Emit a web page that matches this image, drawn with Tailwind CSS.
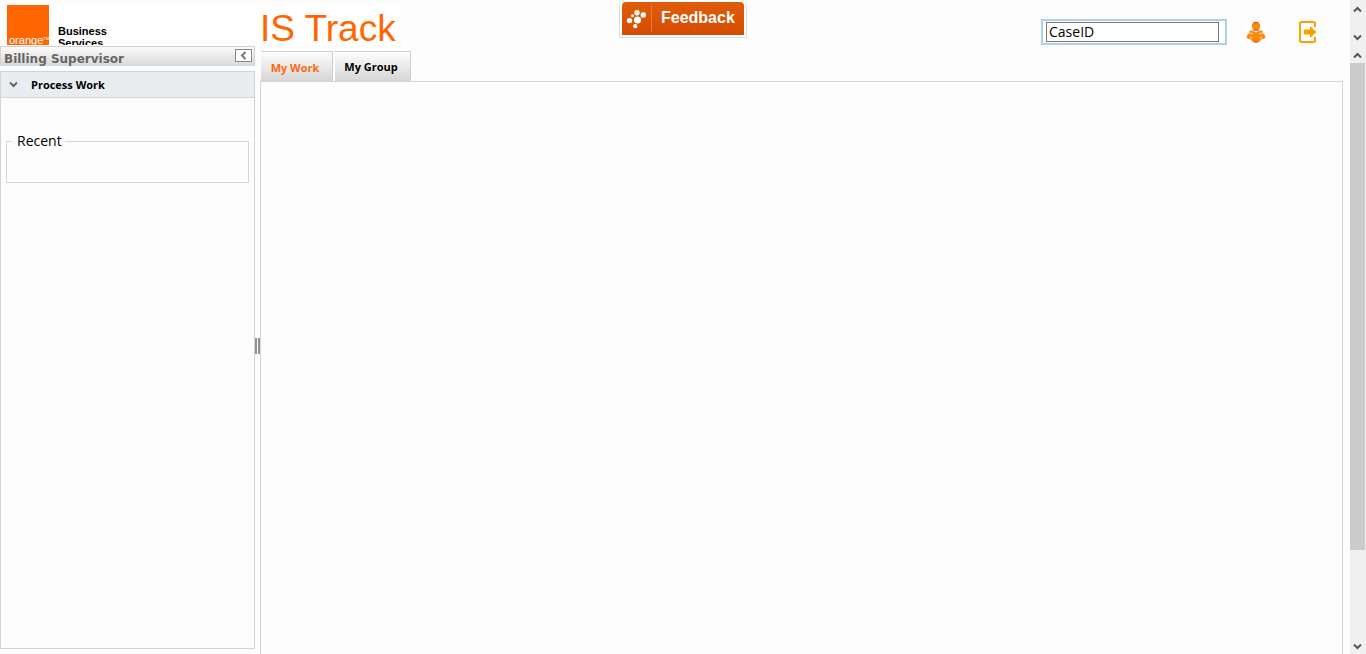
<!DOCTYPE html>
<html lang="en">
<head>
<meta charset="utf-8">
<title>IS Track</title>
<script src="https://cdn.jsdelivr.net/npm/@tailwindcss/browser@4"></script>
</head>
<body class="flex h-screen flex-col overflow-hidden bg-[#fdfdfd] font-['Open_Sans',sans-serif] text-black">
<header class="flex h-[46px] shrink-0">
  <div class="grid min-w-0 flex-1 grid-cols-[1fr_auto_1fr] items-start">
    <div class="mt-[5px] flex h-10 w-[400px] bg-white pl-[7px]">
      <div class="flex h-10 w-[42px] shrink-0 items-end bg-[#ff6600] pl-[2px] font-['Liberation_Sans',sans-serif] text-[11px] leading-[9px] text-white">orange<sup class="relative -top-1 text-[4px] leading-none">TM</sup></div>
      <p class="ml-[9px] w-[202px] shrink-0 overflow-hidden pt-5 font-['Liberation_Sans',sans-serif] text-[11px] leading-3 font-bold">Business<br>Services</p>
      <h1 class="font-['Liberation_Sans',sans-serif] text-[37px] leading-[48px] whitespace-nowrap text-[#ff6600]">IS Track</h1>
    </div>
    <button class="mr-[-8px] ml-[8px] flex h-[38px] w-32 items-stretch rounded-t-md border border-t-0 border-[#dcdcdc] bg-white px-[2px] pt-[2px] pb-[2px] font-['Liberation_Sans',sans-serif] text-base font-bold text-white">
      <span class="flex w-full rounded-t-[4px] bg-linear-to-b from-[#df5d0a] to-[#d64b02]">
        <span class="my-[3px] flex w-[30px] items-center border-r border-[#e87838] pl-1">
          <svg width="20" height="20" viewBox="0 0 20 20" fill="#fff" aria-hidden="true"><circle cx="11.5" cy="11" r="3.6"/><circle cx="11" cy="3.8" r="2.7"/><circle cx="17.3" cy="6" r="2.7"/><circle cx="3.5" cy="11.6" r="2.7"/><circle cx="9.2" cy="17.2" r="2.1"/><circle cx="6.5" cy="6.7" r="1.5"/></svg>
        </span>
        <span class="flex-1 pl-[9px] text-left leading-8">Feedback</span>
      </span>
    </button>
    <div class="mt-[19px] mr-[33px] flex items-center justify-end">
      <div class="flex h-[26px] w-[186px] items-center border-2 border-[#b0d1e6] bg-white pl-[3px]">
        <input aria-label="Case ID" value="CaseID" class="h-5 w-[173px] border border-[#777] bg-white px-[2px] pb-[2px] text-sm leading-4 outline-none">
      </div>
      <button aria-label="Profile" class="ml-[18px]">
        <svg width="22" height="22" viewBox="0 0 22 22"><path fill="#fff" d="M0 0h22v22H0z"/><path d="M5 9.500Q8.500 9 11 11.500 13.500 9 17 9.500L20.500 15.500Q20.500 17.500 17 18.300 14 21.500 11 21.500T5 18.300Q1.500 17.500 1.500 15.500z" fill="#f98a0b"/><path d="M2.500 12.500Q5 11 8 13M19.500 12.500Q17 11 14 13M5.500 15.500l1 2.500M16.500 15.500l-1 2.500" stroke="#ffe3b5" stroke-width="1" fill="none"/><circle cx="11" cy="5" r="4.200" fill="#f98a0b"/><path d="M8.500 2Q11 .5 13.500 2M8 20.500Q11 22 14 20.500M7.500 8.700Q11 10 14.500 8.700" stroke="#df4b12" fill="none" stroke-width="1"/></svg>
      </button>
      <button aria-label="Log out" class="ml-[31px]">
        <svg width="19" height="24" viewBox="0 0 19 24"><path d="M17 7V3.500Q17 2 15.500 2H3.500Q2 2 2 3.500v17Q2 22 3.500 22h12q1.500 0 1.500-1.500V17" fill="none" stroke="#ffa000" stroke-width="2"/><path d="M6 9.500h6V6l6.500 6-6.500 6v-3.500H6z" fill="#ffa000"/></svg>
      </button>
    </div>
  </div>
  <div class="flex w-4 flex-col items-center justify-between bg-[#f0f0f0] pt-[6px] pr-px pb-[5px]" aria-hidden="true">
    <svg width="9" height="7" viewBox="0 0 9 7" fill="none" stroke="#555" stroke-width="2"><path d="m1 5.500 3.500-3.500L8 5.500"/></svg>
    <svg width="9" height="7" viewBox="0 0 9 7" fill="none" stroke="#555" stroke-width="2"><path d="M1 1.500 4.500 5 8 1.500"/></svg>
  </div>
</header>
<div class="flex min-h-0 flex-1">
  <aside class="flex w-[255px] shrink-0 flex-col pb-[5px]">
    <div class="flex h-5 shrink-0 justify-between border border-b-0 border-[#d2d2d2] bg-linear-to-b from-[#fbfbfb] to-[#d8d8d8] pl-[3px]">
      <h2 class="font-['DejaVu_Sans',sans-serif] text-xs leading-6 font-bold text-[#666]">Billing Supervisor</h2>
      <button aria-label="Collapse panel" class="mt-[2px] mr-[2px] flex h-[13px] w-[17px] items-center justify-center border border-[#888] bg-white">
        <svg width="7" height="9" viewBox="0 0 7 9" fill="none" stroke="#777" stroke-width="2"><path d="M5.500 1 2 4.500 5.500 8"/></svg>
      </button>
    </div>
    <section class="mt-[5px] flex flex-1 flex-col border border-[#d3d3d3]">
      <button class="flex h-[26px] items-center border-b border-[#d3d3d3] bg-[#e9edf0] pl-2 text-[11px] leading-4 font-bold">
        <svg width="10" height="8" viewBox="0 0 10 8" fill="none" stroke="#666" stroke-width="2"><path d="M1 1.500 4.500 5 8 1.500"/></svg>
        <span class="ml-3">Process Work</span>
      </button>
      <fieldset class="mx-[5px] mt-[33px] h-[52px] border border-[#d6d6d6] pl-[5px]">
        <legend class="px-[5px] pr-[3px] text-sm leading-5">Recent</legend>
      </fieldset>
    </section>
  </aside>
  <div class="flex w-[5px] shrink-0 cursor-col-resize items-start justify-between pt-[292px]" role="separator" aria-orientation="vertical">
    <span class="h-4 w-[2px] bg-[#919297]"></span><span class="h-4 w-[2px] bg-[#919297]"></span>
  </div>
  <main class="flex min-w-0 flex-1 flex-col pt-[5px] pr-[7px]">
    <div class="flex h-[30px] shrink-0 gap-[2px] pl-px text-[11px] font-bold" role="tablist">
      <button role="tab" aria-selected="true" class="w-[72px] border-t border-r border-[#d0d0d0] bg-linear-to-b from-[#fdfdfd] to-[#d6d6d6] pt-1 pr-[3px] text-[#ff6a0c]">My Work</button>
      <button role="tab" aria-selected="false" class="w-[76px] border-t border-r border-[#d0d0d0] bg-linear-to-b from-[#fdfdfd] to-[#d6d6d6] pt-[2px] pr-[3px]">My Group</button>
    </div>
    <div role="tabpanel" class="flex-1 border border-b-0 border-[#d3d3d3]"></div>
  </main>
  <div class="flex w-4 shrink-0 flex-col items-center bg-[#f0f0f0] pt-[6px] pr-px pb-1" aria-hidden="true">
    <svg width="9" height="7" viewBox="0 0 9 7" fill="none" stroke="#555" stroke-width="2"><path d="m1 5.500 3.500-3.500L8 5.500"/></svg>
    <div class="mt-1 min-h-0 w-full flex-1"><div class="h-[84%] bg-[#cbcbcb]"></div></div>
    <svg width="9" height="7" viewBox="0 0 9 7" fill="none" stroke="#555" stroke-width="2"><path d="M1 1.500 4.500 5 8 1.500"/></svg>
  </div>
</div>
</body>
</html>
